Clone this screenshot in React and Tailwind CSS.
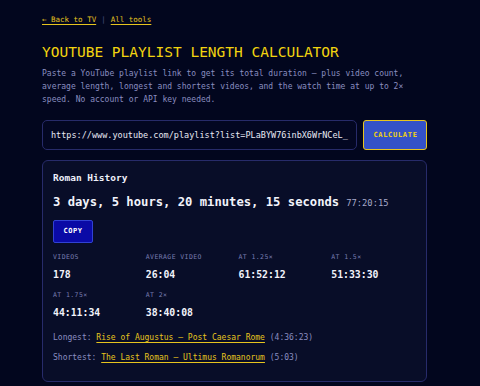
export default function App() {
  const mono = { fontFamily: '"DejaVu Sans Mono", "Liberation Mono", monospace' };
  const stats = [
    ["VIDEOS", "178"],
    ["AVERAGE VIDEO", "26:04"],
    ["AT 1.25×", "61:52:12"],
    ["AT 1.5×", "51:33:30"],
    ["AT 1.75×", "44:11:34"],
    ["AT 2×", "38:40:08"],
  ];
  return (
    <div className="min-h-[386px] w-[480px] bg-[#02061e] pl-[42px] pb-[4px]" style={mono}>
      <div className="w-[385px] flex flex-col">
        <div className="pt-[14px] h-[26px] text-[7.5px] leading-[12px] text-[#e6c41e] whitespace-nowrap">
          <a className="underline underline-offset-2">← Back to TV</a>
          <span className="text-[#4a4f80] mx-[5px]">|</span>
          <a className="underline underline-offset-2">All tools</a>
        </div>
        <h1 className="mt-[17px] text-[14.5px] leading-[18px] text-[#f2d40f] font-normal">
          YOUTUBE PLAYLIST LENGTH CALCULATOR
        </h1>
        <p className="mt-[5.5px] text-[8px] leading-[13px] text-[#8a8ec0]">
          Paste a YouTube playlist link to get its total duration — plus video count, average length, longest and shortest videos, and the watch time at up to 2× speed. No account or API key needed.
        </p>
        <div className="mt-[14.5px] flex gap-[6px] h-[30px]">
          <div className="flex-1 h-[30px] rounded-[5px] border border-[#272b6a] bg-[#030722] pl-[8px] flex items-center overflow-hidden whitespace-nowrap text-[8.5px] text-[#e8e9f4]">
            https://www.youtube.com/playlist?list=PLaBYW76inbX6WrNCeL_
          </div>
          <button className="w-[64px] h-[30px] rounded-[3px] border border-[#e8c51e] bg-[#3452c8] text-[7px] font-bold tracking-[0.7px] text-[#f2d40f] flex items-center justify-center pl-[1px]">
            CALCULATE
          </button>
        </div>
        <div className="mt-[10px] h-[222px] rounded-[6px] border border-[#272b6a] bg-[#080d28] px-[10px] pt-[10px]">
          <div className="text-[9.5px] leading-[14px] font-bold text-[#eef0fa]">Roman History</div>
          <div className="mt-[8px] h-[18px] leading-[18px] flex items-baseline whitespace-nowrap">
            <span className="text-[12.2px] font-bold text-[#f2f3fb]">3 days, 5 hours, 20 minutes, 15 seconds</span>
            <span className="ml-[7px] text-[8.8px] text-[#a6a9c8]">77:20:15</span>
          </div>
          <button className="mt-[9px] w-[40px] h-[23px] rounded-[2px] border border-[#3142d2] bg-[#0a0aa6] text-[7px] font-bold tracking-[0.5px] text-white flex items-center justify-center">
            COPY
          </button>
          <div className="mt-[9.3px] grid grid-cols-4 gap-x-[8px] gap-y-[8.6px]">
            {stats.map(([l, v]) => (
              <div key={l} className="flex flex-col">
                <div className="h-[10px] leading-[10px] text-[6.5px] tracking-[0.4px] text-[#777cb0] whitespace-nowrap">{l}</div>
                <div className="mt-[5.4px] h-[14px] leading-[14px] text-[9.8px] font-bold text-[#f2f3fb]">{v}</div>
              </div>
            ))}
          </div>
          <div className="mt-[11.1px] text-[8px] leading-[13px] text-[#8a8ec0] whitespace-nowrap">
            Longest: <a className="text-[#e6c41e] underline underline-offset-2">Rise of Augustus — Post Caesar Rome</a> (4:36:23)
          </div>
          <div className="mt-[7px] text-[8px] leading-[13px] text-[#8a8ec0] whitespace-nowrap">
            Shortest: <a className="text-[#e6c41e] underline underline-offset-2">The Last Roman — Ultimus Romanorum</a> (5:03)
          </div>
        </div>
      </div>
    </div>
  );
}
